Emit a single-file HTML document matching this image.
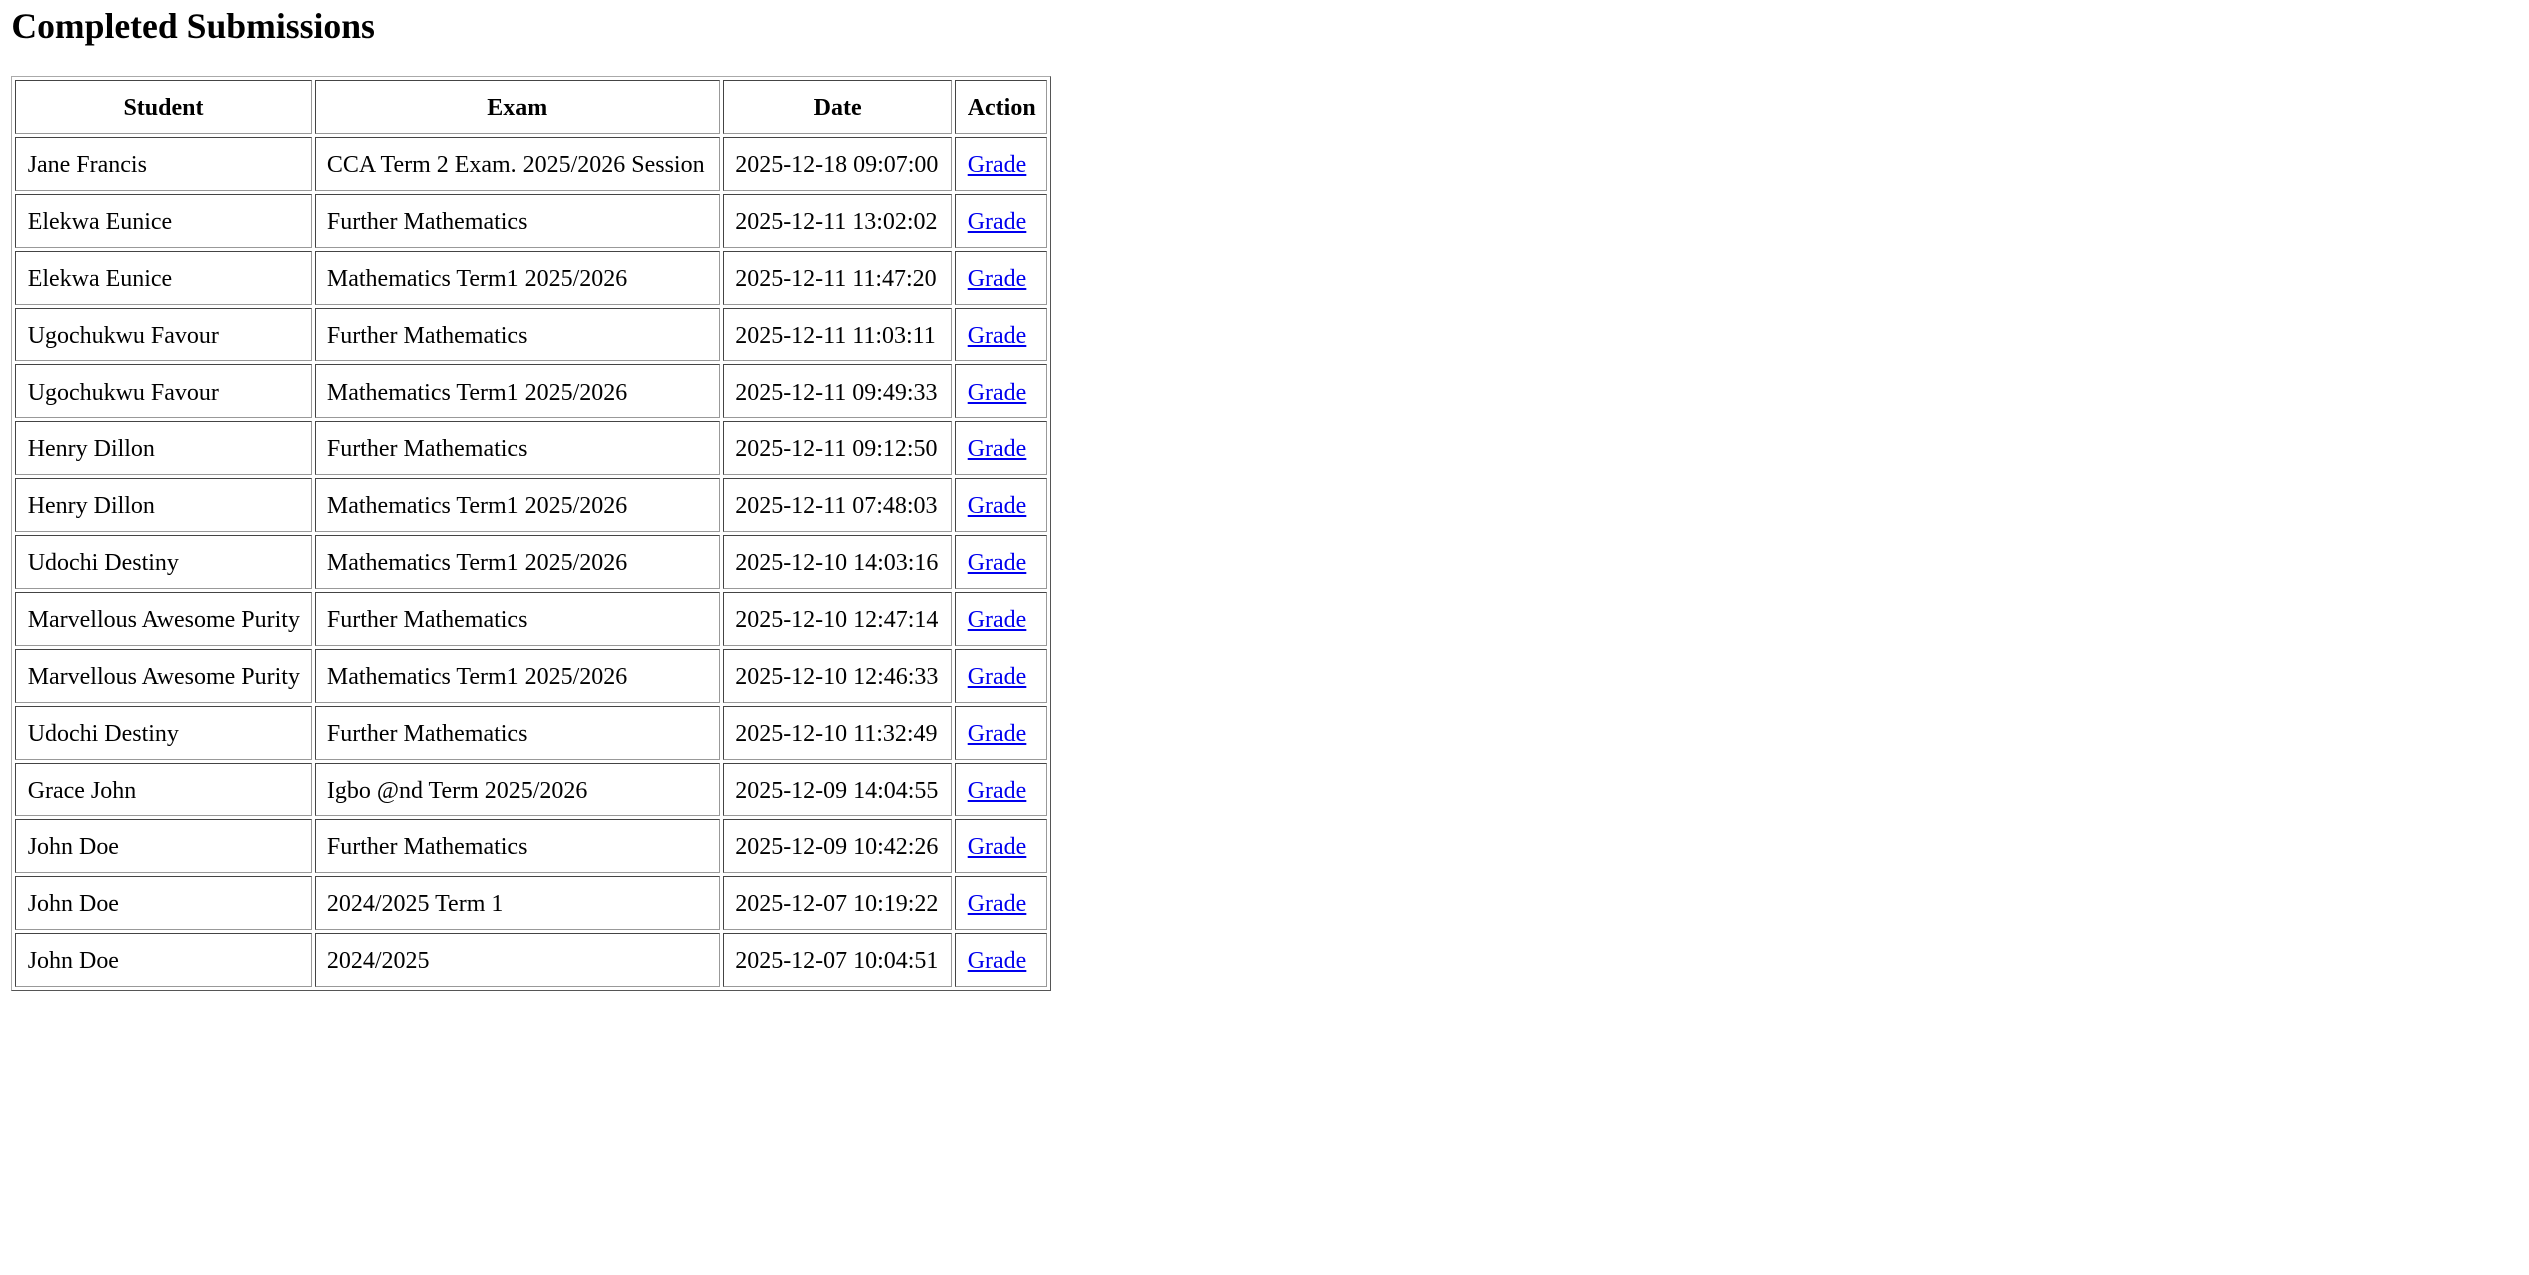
<!DOCTYPE html>
<html><head><meta charset="utf-8"><style>
html,body{margin:0;padding:0;background:#fff;}
body{zoom:1.6212;font-family:"Liberation Serif",serif;font-size:14.8px;color:#000;width:1560px;height:786px;overflow:hidden;position:relative;}
h2{margin:0;position:absolute;left:7px;top:3px;font-size:22px;font-weight:bold;}
table{position:absolute;left:7px;top:47px;border:1px solid #888;border-color:#aaa #555 #555 #aaa;border-spacing:2px;table-layout:fixed;width:641px;}
td,th{border:1px solid #666;border-color:#444 #999 #999 #444;padding:2px 7px 0 7px;height:30px;text-align:left;white-space:nowrap;}
th{text-align:center;font-weight:bold;}
a{color:#00e;text-decoration:underline;}
</style></head><body>
<h2>Completed Submissions</h2>
<table>
<colgroup><col style="width:182px"><col style="width:249px"><col style="width:141px"><col style="width:56px"></colgroup>
<tr><th>Student</th><th>Exam</th><th>Date</th><th>Action</th></tr>
<tr><td>Jane Francis</td><td>CCA Term 2 Exam. 2025/2026 Session</td><td>2025-12-18 09:07:00</td><td><a>Grade</a></td></tr>
<tr><td>Elekwa Eunice</td><td>Further Mathematics</td><td>2025-12-11 13:02:02</td><td><a>Grade</a></td></tr>
<tr><td>Elekwa Eunice</td><td>Mathematics Term1 2025/2026</td><td>2025-12-11 11:47:20</td><td><a>Grade</a></td></tr>
<tr><td>Ugochukwu Favour</td><td>Further Mathematics</td><td>2025-12-11 11:03:11</td><td><a>Grade</a></td></tr>
<tr><td>Ugochukwu Favour</td><td>Mathematics Term1 2025/2026</td><td>2025-12-11 09:49:33</td><td><a>Grade</a></td></tr>
<tr><td>Henry Dillon</td><td>Further Mathematics</td><td>2025-12-11 09:12:50</td><td><a>Grade</a></td></tr>
<tr><td>Henry Dillon</td><td>Mathematics Term1 2025/2026</td><td>2025-12-11 07:48:03</td><td><a>Grade</a></td></tr>
<tr><td>Udochi Destiny</td><td>Mathematics Term1 2025/2026</td><td>2025-12-10 14:03:16</td><td><a>Grade</a></td></tr>
<tr><td>Marvellous Awesome Purity</td><td>Further Mathematics</td><td>2025-12-10 12:47:14</td><td><a>Grade</a></td></tr>
<tr><td>Marvellous Awesome Purity</td><td>Mathematics Term1 2025/2026</td><td>2025-12-10 12:46:33</td><td><a>Grade</a></td></tr>
<tr><td>Udochi Destiny</td><td>Further Mathematics</td><td>2025-12-10 11:32:49</td><td><a>Grade</a></td></tr>
<tr><td>Grace John</td><td>Igbo @nd Term 2025/2026</td><td>2025-12-09 14:04:55</td><td><a>Grade</a></td></tr>
<tr><td>John Doe</td><td>Further Mathematics</td><td>2025-12-09 10:42:26</td><td><a>Grade</a></td></tr>
<tr><td>John Doe</td><td>2024/2025 Term 1</td><td>2025-12-07 10:19:22</td><td><a>Grade</a></td></tr>
<tr><td>John Doe</td><td>2024/2025</td><td>2025-12-07 10:04:51</td><td><a>Grade</a></td></tr>
</table>
</body></html>
